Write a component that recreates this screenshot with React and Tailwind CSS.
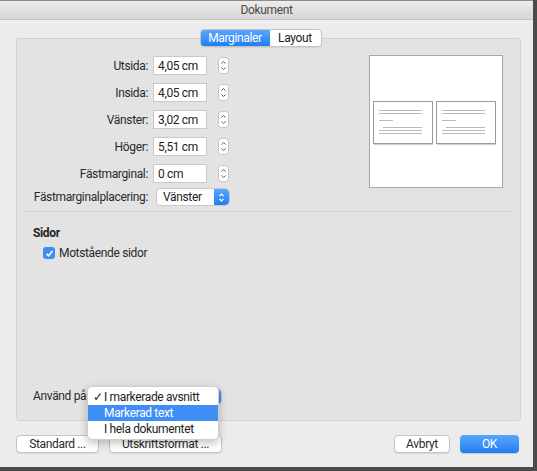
import React from 'react'

const FONT = { fontFamily: 'Roboto, "Liberation Sans", Arial, sans-serif', letterSpacing: '-0.35px' }

const ROWS = [
  { label: 'Utsida:', value: '4,05 cm' },
  { label: 'Insida:', value: '4,05 cm' },
  { label: 'Vänster:', value: '3,02 cm' },
  { label: 'Höger:', value: '5,51 cm' },
  { label: 'Fästmarginal:', value: '0 cm' },
]

function Stepper() {
  return (
    <svg width="11" height="17" viewBox="0 0 11 17">
      <rect x="0.5" y="0.5" width="10" height="16" rx="3" fill="#fff" stroke="#c4c4c4" />
      <path d="M3.5 6.5 L5.5 4.5 L7.5 6.5" fill="none" stroke="#555" strokeWidth="1" />
      <path d="M3.5 10.5 L5.5 12.5 L7.5 10.5" fill="none" stroke="#555" strokeWidth="1" />
    </svg>
  )
}

function BlueArrows() {
  return (
    <div className="w-[15px] h-full rounded-r-[4px] bg-gradient-to-b from-[#5aa6fb] to-[#1f7ef2] flex items-center justify-center">
      <svg width="7" height="11" viewBox="0 0 7 11">
        <path d="M1.5 4 L3.5 2 L5.5 4" fill="none" stroke="#fff" strokeWidth="1.2" />
        <path d="M1.5 7 L3.5 9 L5.5 7" fill="none" stroke="#fff" strokeWidth="1.2" />
      </svg>
    </div>
  )
}

function Preview() {
  const page = (x, lx) => (
    <g>
      <rect x={x + 1} y="46" width="59" height="43" fill="#cfcfcf" />
      <rect x={x + 0.5} y="45.5" width="59" height="42" fill="#fff" stroke="#9a9a9a" />
      <line x1={lx} x2={lx + 43} y1="54.5" y2="54.5" stroke="#b9b9b9" />
      <line x1={lx} x2={lx + 43} y1="57.5" y2="57.5" stroke="#b9b9b9" />
      <line x1={lx} x2={lx + 14} y1="64.5" y2="64.5" stroke="#b9b9b9" />
      <line x1={lx + 4} x2={lx + 43} y1="71.5" y2="71.5" stroke="#b9b9b9" />
      <line x1={lx} x2={lx + 43} y1="74.5" y2="74.5" stroke="#b9b9b9" />
      <line x1={lx} x2={lx + 43} y1="77.5" y2="77.5" stroke="#b9b9b9" />
    </g>
  )
  return (
    <div className="w-[134px] h-[133px] bg-white border border-[#a8a8a8]">
      <svg width="132" height="131" viewBox="0 0 132 131">
        {page(3, 9)}
        {page(66, 72)}
      </svg>
    </div>
  )
}

function Button({ children, className = '' }) {
  return (
    <button
      className={`h-[18px] rounded-[4px] bg-white border border-[#c5c5c5] shadow-[0_1px_0_rgba(0,0,0,0.08)] text-[12px] text-[#2a2a2a] flex items-center justify-center ${className}`}
    >
      {children}
    </button>
  )
}

export default function App() {
  return (
    <div className="w-[537px] h-[471px] bg-[#4a4a4a] overflow-hidden" style={FONT}>
      <div className="w-[533px] h-[467px] bg-[#ececec] flex flex-col border-t border-[#8c8c8c]">
        {/* Title bar */}
        <div className="h-[19px] bg-gradient-to-b from-[#ececec] to-[#d6d6d6] border-b border-[#c4c4c4] flex items-center justify-center text-[12px] text-[#4a4a4a]">
          Dokument
        </div>

        <div className="flex flex-col pl-4 pr-3 pt-[9px]">
          {/* Tabs */}
          <div className="flex justify-center -mb-[9px] relative z-10 pr-[16px]">
            <div className="flex h-[18px] rounded-[4px] border border-[#c4c4c4] bg-white overflow-hidden text-[12px] shadow-[0_1px_0_rgba(0,0,0,0.06)]">
              <div className="w-[69px] flex items-center justify-center bg-gradient-to-b from-[#5aa6fb] to-[#1f7ef2] text-white">
                Marginaler
              </div>
              <div className="w-[51px] flex items-center justify-center text-[#222]">Layout</div>
            </div>
          </div>

          {/* Tab box */}
          <div className="h-[383px] bg-[#e3e3e3] border border-[#d3d3d3] rounded-[3px] flex flex-col">
            <div className="flex justify-between pt-[16px]">
              <div className="flex flex-col gap-[8px] pt-[1px]">
                {ROWS.map((r) => (
                  <div key={r.label} className="flex items-center h-[19px]">
                    <div className="w-[131px] text-right text-[12px] text-[#2a2a2a]">{r.label}</div>
                    <div className="ml-[5px] w-[54px] h-[19px] bg-white border border-[#c9c9c9] text-[12px] text-[#222] flex items-center pl-[4px]">
                      {r.value}
                    </div>
                    <div className="ml-[11px] flex items-center">
                      <Stepper />
                    </div>
                  </div>
                ))}
                <div className="flex items-center h-[18px] -mt-[3px]">
                  <div className="w-[131px] text-right text-[12px] text-[#2a2a2a]">Fästmarginalplacering:</div>
                  <div className="ml-[8px] w-[74px] h-[18px] bg-white border border-[#c9c9c9] rounded-[4px] flex items-stretch overflow-hidden">
                    <div className="flex-1 text-[12px] text-[#222] flex items-center pl-[6px]">Vänster</div>
                    <BlueArrows />
                  </div>
                </div>
              </div>
              <div className="mr-[17px]">
                <Preview />
              </div>
            </div>

            <div className="mx-[7px] mt-[5px] border-t border-[#d2d2d2]" />

            <div className="pl-[16px] pt-[12px] text-[12px] font-bold text-[#222]">Sidor</div>
            <div className="pl-[26px] pt-[2px] flex items-center gap-[4px]">
              <div className="w-[12px] h-[12px] rounded-[3px] bg-[#3c8ef3] flex items-center justify-center">
                <svg width="9" height="9" viewBox="0 0 9 9">
                  <path d="M1.5 4.8 L3.6 6.8 L7.5 2" fill="none" stroke="#fff" strokeWidth="1.6" />
                </svg>
              </div>
              <span className="text-[12px] text-[#2a2a2a]">Motstående sidor</span>
            </div>

            <div className="flex-1" />

            <div className="relative flex items-center h-[18px] mb-[15px] pl-[16px]">
              <span className="text-[12px] text-[#2a2a2a]">Använd på:</span>
              <div className="ml-[2px] w-[131px] h-[17px] bg-white border border-[#c9c9c9] rounded-[4px] flex items-stretch overflow-hidden">
                <div className="flex-1" />
                <BlueArrows />
              </div>
              {/* Open popup menu */}
              <div className="absolute left-[70px] -top-[1px] w-[132px] py-[2px] bg-white rounded-[5px] border border-[#cfcfcf] shadow-[0_3px_8px_rgba(0,0,0,0.25)] text-[12px] text-[#222] z-20">
                <div className="h-[16px] flex items-center pl-[5px]">
                  <span className="w-[11px]">✓</span>
                  <span>I markerade avsnitt</span>
                </div>
                <div className="h-[16px] flex items-center pl-[16px] bg-[#3f8ef5] text-white">Markerad text</div>
                <div className="h-[16px] flex items-center pl-[16px]">I hela dokumentet</div>
              </div>
            </div>
          </div>

          {/* Footer buttons */}
          <div className="flex items-center mt-[14px]">
            <Button className="w-[83px]">Standard ...</Button>
            <Button className="w-[113px] ml-[10px]">Utskriftsformat ...</Button>
            <div className="flex-1" />
            <Button className="w-[56px]">Avbryt</Button>
            <button className="ml-[10px] mr-[2px] w-[59px] h-[18px] rounded-[4px] bg-gradient-to-b from-[#5aa6fb] to-[#1f7ef2] text-white text-[12px] shadow-[0_1px_1px_rgba(0,0,0,0.15)]">
              OK
            </button>
          </div>
        </div>
      </div>
    </div>
  )
}
